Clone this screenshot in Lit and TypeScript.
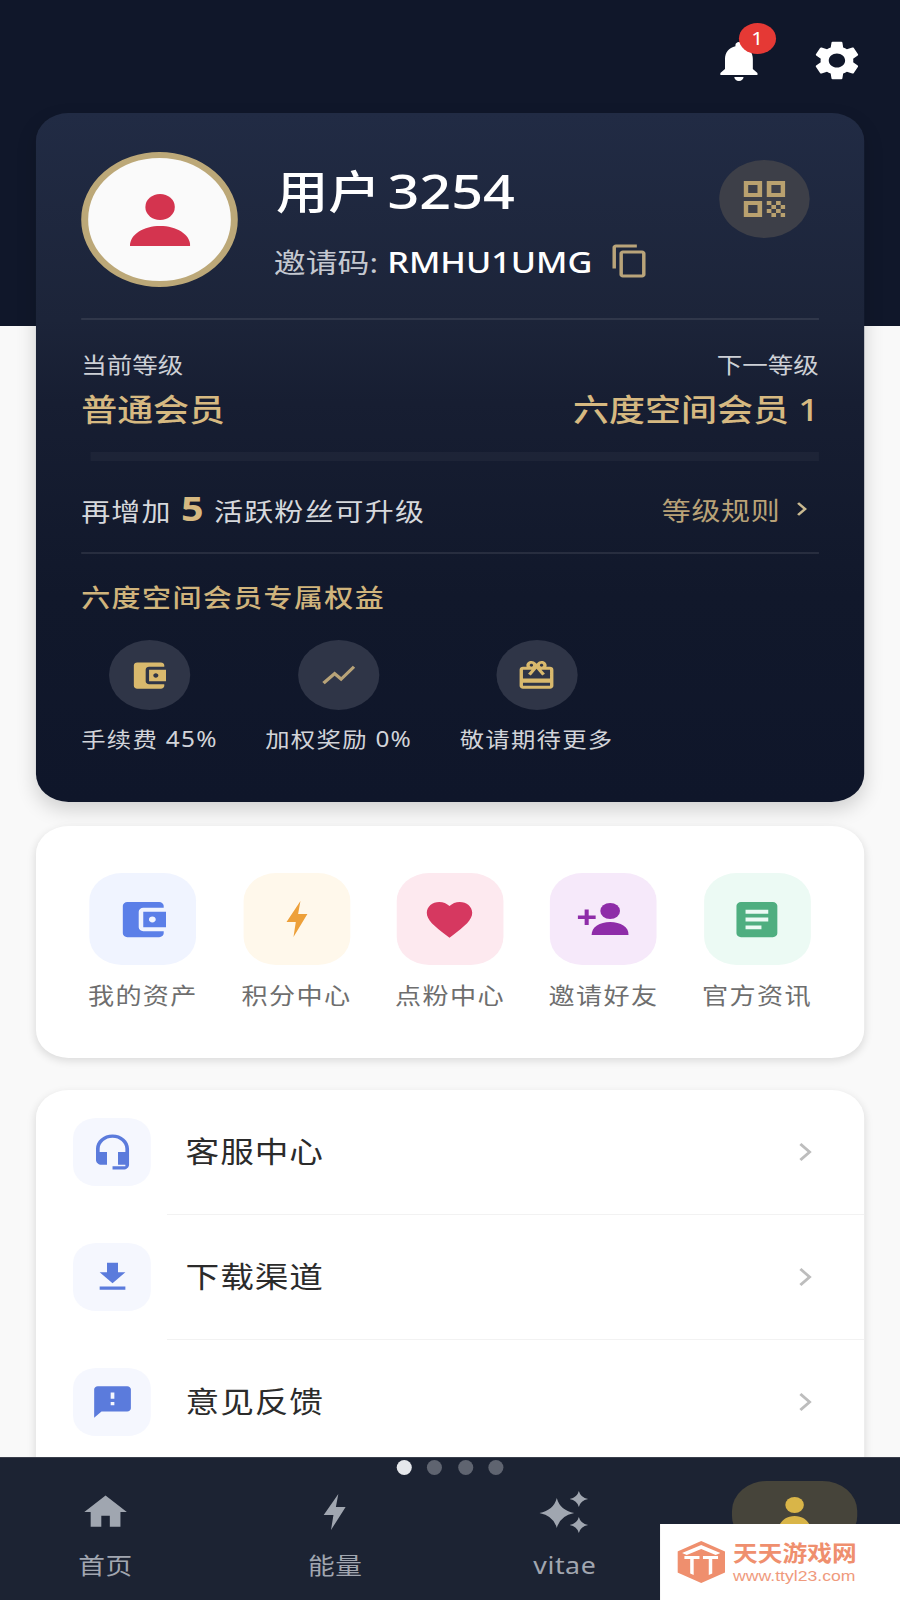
import { LitElement, html, css, svg } from "lit";
import { customElement } from "lit/decorators.js";

const P = {
  bell: "M12 22c1.1 0 2-.9 2-2h-4c0 1.1.9 2 2 2zm6-6v-5c0-3.07-1.63-5.64-4.5-6.32V4c0-.83-.67-1.5-1.5-1.5s-1.5.67-1.5 1.5v.68C7.64 5.36 6 7.92 6 11v5l-2 2v1h16v-1l-2-2z",
  gear: "M19.14 12.94c.04-.3.06-.61.06-.94 0-.32-.02-.64-.07-.94l2.03-1.58c.18-.14.23-.41.12-.61l-1.92-3.32c-.12-.22-.37-.29-.59-.22l-2.39.96c-.5-.38-1.03-.7-1.62-.94l-.36-2.54c-.04-.24-.24-.41-.48-.41h-3.84c-.24 0-.43.17-.47.41l-.36 2.54c-.59.24-1.13.57-1.62.94l-2.39-.96c-.22-.08-.47 0-.59.22L2.74 8.87c-.12.21-.08.47.12.61l2.03 1.58c-.05.3-.09.63-.09.94s.02.64.07.94l-2.03 1.58c-.18.14-.23.41-.12.61l1.92 3.32c.12.22.37.29.59.22l2.39-.96c.5.38 1.03.7 1.62.94l.36 2.54c.05.24.24.41.48.41h3.84c.24 0 .44-.17.47-.41l.36-2.54c.59-.24 1.13-.56 1.62-.94l2.39.96c.22.08.47 0 .59-.22l1.92-3.32c.12-.22.07-.47-.12-.61l-2.01-1.58zM12 15.6c-1.98 0-3.6-1.62-3.6-3.6s1.62-3.6 3.6-3.6 3.6 1.62 3.6 3.6-1.62 3.6-3.6 3.6z",
  copy: "M16 1H4c-1.1 0-2 .9-2 2v14h2V3h12V1zm3 4H8c-1.1 0-2 .9-2 2v14c0 1.1.9 2 2 2h11c1.1 0 2-.9 2-2V7c0-1.1-.9-2-2-2zm0 16H8V7h11v14z",
  wallet: "M21 18v1c0 1.1-.9 2-2 2H5c-1.11 0-2-.9-2-2V5c0-1.1.89-2 2-2h14c1.1 0 2 .9 2 2v1h-9c-1.11 0-2 .9-2 2v8c0 1.1.89 2 2 2h9zm-9-2h10V8H12v8zm4-2.5c-.83 0-1.5-.67-1.5-1.5s.67-1.5 1.5-1.5 1.5.67 1.5 1.5-.67 1.5-1.5 1.5z",
  trend: "M3.5 18.49l6-6.01 4 4L22 6.92l-1.41-1.41-7.09 7.97-4-4L2 16.99z",
  gift: "M20 6h-2.18c.11-.31.18-.65.18-1 0-1.66-1.34-3-3-3-1.05 0-1.96.54-2.5 1.35l-.5.67-.5-.68C10.96 2.54 10.05 2 9 2 7.34 2 6 3.34 6 5c0 .35.07.69.18 1H4c-1.11 0-1.99.89-1.99 2L2 19c0 1.11.89 2 2 2h16c1.11 0 2-.89 2-2V8c0-1.11-.89-2-2-2zm-5-2c.55 0 1 .45 1 1s-.45 1-1 1-1-.45-1-1 .45-1 1-1zM9 4c.55 0 1 .45 1 1s-.45 1-1 1-1-.45-1-1 .45-1 1-1zm11 15H4v-2h16v2zm0-5H4V8h5.08L7 10.83 8.62 12 11 8.76l1-1.36 1 1.36L15.38 12 17 10.83 14.92 8H20v6z",
  heart: "M12 21.35l-1.45-1.32C5.4 15.36 2 12.28 2 8.5 2 5.42 4.42 3 7.5 3c1.74 0 3.34.81 4.5 2.09C13.16 3.81 14.76 3 16.5 3 19.58 3 22 5.42 22 8.5c0 3.78-3.4 6.86-8.55 11.54L12 21.35z",
  doc: "M19 3H5c-1.1 0-2 .9-2 2v14c0 1.1.9 2 2 2h14c1.1 0 2-.9 2-2V5c0-1.1-.9-2-2-2zm-5 14H7v-2h7v2zm3-4H7v-2h10v2zm0-4H7V7h10v2z",
  headset: "M12 1c-4.97 0-9 4.03-9 9v7c0 1.66 1.34 3 3 3h3v-8H5v-2c0-3.87 3.13-7 7-7s7 3.13 7 7v2h-4v8h4v1h-7v2h6c1.66 0 3-1.34 3-3V10c0-4.97-4.03-9-9-9z",
  download: "M19 9h-4V3H9v6H5l7 7 7-7zM5 18v2h14v-2H5z",
  feedback: "M20 2H4c-1.1 0-1.99.9-1.99 2L2 22l4-4h14c1.1 0 2-.9 2-2V4c0-1.1-.9-2-2-2zm-7 12h-2v-2h2v2zm0-4h-2V6h2v4z",
  home: "M10 20v-6h4v6h5v-8h3L12 3 2 12h3v8z",
};

const mi = (d: string, size: number, color: string) =>
  html`<svg width=${size} height=${size} viewBox="0 0 24 24" fill=${color}><path d=${d}></path></svg>`;

const star = (cx: number, cy: number, r: number) => {
  const k = r * 0.18;
  return `M${cx} ${cy - r}Q${cx + k} ${cy - k} ${cx + r} ${cy}Q${cx + k} ${cy + k} ${cx} ${cy + r}Q${cx - k} ${cy + k} ${cx - r} ${cy}Q${cx - k} ${cy - k} ${cx} ${cy - r}Z`;
};

const boltIcon = (w: number, h: number, color: string) =>
  html`<svg width=${w} height=${h} viewBox="0 0 20 36" preserveAspectRatio="none" fill=${color}><path d="M13 0L1 21h8L7 36 19 13h-8z"></path></svg>`;

const personAdd = html`<svg width="44" height="32" viewBox="0 0 44 32" fill="#8e2ca8">
  <ellipse cx="28" cy="8" rx="8.500" ry="8"></ellipse>
  <path d="M12 32C12 24 19 19 28 19S44 24 44 32Z"></path>
  <path d="M0 12.500h6V6.500h3.500v6h6v3.500h-6v6H6v-6H0z"></path>
</svg>`;

const qrIcon = html`<svg width="36" height="36" viewBox="0 0 36 36" fill="none" stroke="#b9a16f" stroke-width="4">
  <rect x="2" y="2" width="12" height="12"></rect>
  <rect x="22" y="2" width="12" height="12"></rect>
  <rect x="2" y="22" width="12" height="12"></rect>
  <g fill="#b9a16f" stroke="none">
    ${[0, 1, 2, 3].flatMap((r) =>
      [0, 1, 2, 3]
        .filter((c) => (r + c) % 2 === 0)
        .map((c) => svg`<rect x=${20 + c * 4} y=${20 + r * 4} width="4" height="4"></rect>`)
    )}
  </g>
</svg>`;

const benefits = [
  { icon: mi(P.wallet, 35, "#d9b96d"), label: "手续费 45%" },
  { icon: mi(P.trend, 34, "#b8a378"), label: "加权奖励 0%" },
  { icon: mi(P.gift, 35, "#d9b96d"), label: "敬请期待更多" },
];

const tiles = [
  { icon: mi(P.wallet, 47, "#5b7fe8"), bg: "#f0f4ff", label: "我的资产" },
  { icon: boltIcon(20, 36, "#eda03a"), bg: "#fff8eb", label: "积分中心" },
  { icon: mi(P.heart, 47, "#d63860"), bg: "#fde9ef", label: "点粉中心" },
  { icon: personAdd, bg: "#f6e9fa", label: "邀请好友" },
  { icon: mi(P.doc, 47, "#4fae80"), bg: "#ecfaf4", label: "官方资讯" },
];

const rows = [
  { icon: mi(P.headset, 38, "#5b7bdc"), label: "客服中心" },
  { icon: mi(P.download, 38, "#5b7bdc"), label: "下载渠道" },
  { icon: mi(P.feedback, 38, "#5b7bdc"), label: "意见反馈" },
];

@customElement("app-root")
export class AppRoot extends LitElement {
  static styles = css`
    :host {
      display: block;
      width: 900px;
      height: 1600px;
      overflow: hidden;
      background: #f9f9f9;
      font-family: "Noto Sans", "Noto Sans CJK SC", sans-serif;
    }
    svg { display: block; flex: none; }
    .stage {
      position: relative;
      width: 775.86px;
      height: 1600px;
      display: flex;
      flex-direction: column;
      transform: scaleX(1.16);
      transform-origin: 0 0;
    }
    .content {
      flex: 1;
      min-height: 0;
      overflow: hidden;
      padding: 0 31px;
      background: linear-gradient(#10172a 326px, #f9f9f9 326px);
    }
    .topbar {
      display: flex;
      justify-content: flex-end;
      gap: 37px;
      padding-top: 37px;
      margin-bottom: 28px;
    }
    .bell { position: relative; }
    .badge {
      position: absolute;
      left: 24px;
      top: -14px;
      width: 32px;
      height: 31px;
      border-radius: 50%;
      background: #e53935;
      color: #fff;
      font-size: 18px;
      line-height: 31px;
      text-align: center;
    }
    .hero {
      padding: 39px 39px 48px;
      border-radius: 28px;
      background: linear-gradient(#212b44 0%, #1c2439 30%, #171e32 42%, #11182b 70%, #0f162a 100%);
      box-shadow: 0 8px 18px rgba(0, 0, 0, 0.16);
    }
    .profile { display: flex; align-items: flex-start; }
    .avatar {
      width: 135px;
      height: 135px;
      box-sizing: border-box;
      border: 6px solid #bca878;
      border-radius: 50%;
      background: #fafafa;
      display: flex;
      align-items: center;
      justify-content: center;
      flex: none;
    }
    .info { flex: 1; margin-left: 33px; padding-top: 14px; }
    .name {
      color: #fff;
      font-size: 45px;
      line-height: 50px;
      font-weight: 500;
      white-space: nowrap;
    }
    .digits { font-size: 48px; margin-left: 6px; font-weight: 500; }
    .invite {
      display: flex;
      align-items: center;
      margin-top: 24px;
      height: 40px;
      color: #c4c8d0;
      font-size: 27.500px;
      white-space: nowrap;
      margin-left: -2px;
    }
    .code { color: #fff; margin-left: 8px; font-size: 29.500px; font-weight: 500; }
    .copy { margin-left: 14px; }
    .qr {
      width: 78px;
      height: 78px;
      margin: 8px 8px 0 0;
      border-radius: 50%;
      background: #3d3f48;
      display: flex;
      align-items: center;
      justify-content: center;
      flex: none;
    }
    .rule { height: 2px; background: rgba(255, 255, 255, 0.09); }
    .rule.first { margin-top: 31px; }
    .levels { display: flex; justify-content: space-between; margin-top: 30px; }
    .right { text-align: right; }
    .lv-label { color: #cdd0d6; font-size: 22px; line-height: 28px; }
    .lv-value {
      color: #d6b981;
      font-size: 31px;
      line-height: 40px;
      font-weight: 500;
      margin-top: 11px;
    }
    .track { height: 9px; margin: 23px 0 0 8px; background: rgba(255, 255, 255, 0.035); }
    .upgrade {
      display: flex;
      justify-content: space-between;
      align-items: center;
      height: 40px;
      margin-top: 28px;
      margin-bottom: 23px;
      font-size: 25px;
      letter-spacing: 1px;
      color: #d6d8dc;
    }
    .up-text { padding-bottom: 3px; }
    .five { color: #d6b981; font-size: 34px; font-weight: 700; margin: 0 8px; line-height: 40px; }
    .rules { display: flex; align-items: center; color: #b9a277; padding-right: 10px; letter-spacing: 0.6px; }
    .rules svg { margin-left: 13px; }
    .perk-title {
      color: #d0b47c;
      font-size: 25px;
      line-height: 36px;
      font-weight: 500;
      margin-top: 25px;
      letter-spacing: 1.200px;
    }
    .perks { display: flex; gap: 41px; margin-top: 25px; }
    .perk { display: flex; flex-direction: column; align-items: center; }
    .perk-icon {
      width: 70px;
      height: 70px;
      border-radius: 50%;
      background: #2f3547;
      display: flex;
      align-items: center;
      justify-content: center;
    }
    .perk-label {
      color: #d2d4d9;
      font-size: 21px;
      line-height: 30px;
      margin-top: 14px;
      letter-spacing: 1.100px;
      white-space: nowrap;
    }
    .card {
      background: #fff;
      border-radius: 28px;
      box-shadow: 0 3px 8px rgba(0, 0, 0, 0.12);
    }
    .shortcuts {
      margin-top: 24px;
      height: 232px;
      box-sizing: border-box;
      padding: 47px 26px 0;
      display: grid;
      grid-template-columns: repeat(5, 1fr);
      align-content: start;
    }
    .shortcut { display: flex; flex-direction: column; align-items: center; }
    .tile {
      width: 92px;
      height: 92px;
      border-radius: 28px;
      display: flex;
      align-items: center;
      justify-content: center;
    }
    .tile-label {
      color: #6e6e6e;
      font-size: 22.500px;
      line-height: 32px;
      letter-spacing: 1.200px;
      margin-top: 15px;
      white-space: nowrap;
    }
    .list { margin-top: 32px; height: 420px; }
    .row {
      height: 123.500px;
      display: flex;
      align-items: center;
      padding: 0 45px 0 32px;
    }
    .row-icon {
      width: 67px;
      height: 68px;
      border-radius: 20px;
      background: #f5f7fe;
      display: flex;
      align-items: center;
      justify-content: center;
      flex: none;
    }
    .row-label {
      flex: 1;
      margin-left: 30px;
      padding-bottom: 4px;
      color: #2b2b2b;
      font-size: 29px;
      letter-spacing: 0.8px;
    }
    .sep { height: 1.500px; margin-left: 113px; background: #f2f2f2; }
    .nav {
      height: 143px;
      box-sizing: border-box;
      flex: none;
      background: #1c2333;
      border-top: 1px solid #3a3f4c;
      padding: 2px 37px 0;
    }
    .dots { display: flex; justify-content: center; gap: 13.500px; height: 21px; }
    .dot { width: 13px; height: 15px; border-radius: 50%; background: #5f6470; }
    .dot.on { background: #e5e7eb; }
    .tabs { display: flex; justify-content: space-between; }
    .tab { width: 108px; display: flex; flex-direction: column; align-items: center; }
    .tab-icon {
      width: 108px;
      height: 65px;
      border-radius: 30px;
      display: flex;
      align-items: center;
      justify-content: center;
      padding-bottom: 4px;
      box-sizing: border-box;
    }
    .tab.active .tab-icon { background: #46443a; padding: 10px 0 0; }
    .tab-label {
      color: #a1a6b0;
      font-size: 23px;
      line-height: 30px;
      margin-top: 4px;
      letter-spacing: 0.5px;
    }
    .mark {
      position: absolute;
      left: 569px;
      right: 0;
      top: 1524px;
      bottom: 0;
      background: #fff;
      display: flex;
      align-items: center;
      gap: 7px;
      padding-left: 15px;
      box-sizing: border-box;
    }
    .mark-name {
      color: #ef8f6e;
      font-size: 21.300px;
      line-height: 24px;
      font-weight: 700;
      white-space: nowrap;
    }
    .mark-url {
      color: #ef9a7d;
      font-family: "Liberation Sans", sans-serif;
      font-size: 15.200px;
      line-height: 16px;
      margin-top: 3px;
      white-space: nowrap;
    }
  `;

  render() {
    return html`<div class="stage">
      <div class="content">
        <div class="topbar">
          <div class="bell">
            ${mi(P.bell, 48, "#fff")}
            <div class="badge">1</div>
          </div>
          ${mi(P.gear, 47, "#fff")}
        </div>

        <section class="hero">
          <div class="profile">
            <div class="avatar">
              <svg width="52" height="52" viewBox="0 0 52 52" fill="#d4344f">
                <ellipse cx="26" cy="13" rx="12.700" ry="13"></ellipse>
                <path d="M0 52C0 40 12 32 26 32S52 40 52 52Z"></path>
              </svg>
            </div>
            <div class="info">
              <div class="name">用户<span class="digits">3254</span></div>
              <div class="invite">
                <span>邀请码:</span><span class="code">RMHU1UMG</span>
                <span class="copy">${mi(P.copy, 36, "#b9a47a")}</span>
              </div>
            </div>
            <div class="qr">${qrIcon}</div>
          </div>
          <div class="rule first"></div>
          <div class="levels">
            <div>
              <div class="lv-label">当前等级</div>
              <div class="lv-value">普通会员</div>
            </div>
            <div class="right">
              <div class="lv-label">下一等级</div>
              <div class="lv-value">六度空间会员 1</div>
            </div>
          </div>
          <div class="track"></div>
          <div class="upgrade">
            <div class="up-text">再增加<span class="five">5</span>活跃粉丝可升级</div>
            <div class="rules">
              等级规则
              <svg width="10" height="16" viewBox="0 0 10 16" fill="none" stroke="#c9b990" stroke-width="2.400"><path d="M2 2l6 6-6 6"></path></svg>
            </div>
          </div>
          <div class="rule"></div>
          <div class="perk-title">六度空间会员专属权益</div>
          <div class="perks">
            ${benefits.map(
              (b) => html`<div class="perk">
                <div class="perk-icon">${b.icon}</div>
                <div class="perk-label">${b.label}</div>
              </div>`
            )}
          </div>
        </section>

        <section class="card shortcuts">
          ${tiles.map(
            (t) => html`<div class="shortcut">
              <div class="tile" style="background:${t.bg}">${t.icon}</div>
              <div class="tile-label">${t.label}</div>
            </div>`
          )}
        </section>

        <section class="card list">
          ${rows.map(
            (r, i) => html`${i > 0 ? html`<div class="sep"></div>` : ""}
              <div class="row">
                <div class="row-icon">${r.icon}</div>
                <div class="row-label">${r.label}</div>
                <svg width="12" height="20" viewBox="0 0 12 20" fill="none" stroke="#bdbdbd" stroke-width="2.500"><path d="M2 2l8 8-8 8"></path></svg>
              </div>`
          )}
        </section>
      </div>

      <nav class="nav">
        <div class="dots">
          <div class="dot on"></div>
          <div class="dot"></div>
          <div class="dot"></div>
          <div class="dot"></div>
        </div>
        <div class="tabs">
          <div class="tab">
            <div class="tab-icon">${mi(P.home, 44, "#a0a6b0")}</div>
            <div class="tab-label">首页</div>
          </div>
          <div class="tab">
            <div class="tab-icon">${boltIcon(21, 36, "#a0a6b0")}</div>
            <div class="tab-label">能量</div>
          </div>
          <div class="tab">
            <div class="tab-icon">
              <svg width="44" height="42" viewBox="0 0 44 42" fill="#a0a6b0">
                <path d=${star(15, 22, 15)}></path>
                <path d=${star(34, 8, 8)}></path>
                <path d=${star(34, 34, 8)}></path>
              </svg>
            </div>
            <div class="tab-label">vitae</div>
          </div>
          <div class="tab active">
            <div class="tab-icon">
              <svg width="32" height="44" viewBox="0 0 32 44" fill="#d9b548">
                <ellipse cx="16" cy="8" rx="8" ry="8"></ellipse>
                <path d="M0 44C0 28 6 19 16 19S32 28 32 44Z"></path>
              </svg>
            </div>
          </div>
        </div>
      </nav>

      <div class="mark">
        <svg width="41" height="42" viewBox="0 0 41 42">
          <path fill="#ef8f6e" d="M20.500 0L41 10.500V31.500L20.500 42L0 31.500V10.500Z"></path>
          <path fill="#fff" d="M4 12L20.500 4L37 12L33 14L20.500 8L8 14ZM6 15H19V18H14V34L11 32.500V18H6ZM22 15H35V18H30V32.500L27 34V18H22Z"></path>
        </svg>
        <div>
          <div class="mark-name">天天游戏网</div>
          <div class="mark-url">www.ttyl23.com</div>
        </div>
      </div>
    </div>`;
  }
}
